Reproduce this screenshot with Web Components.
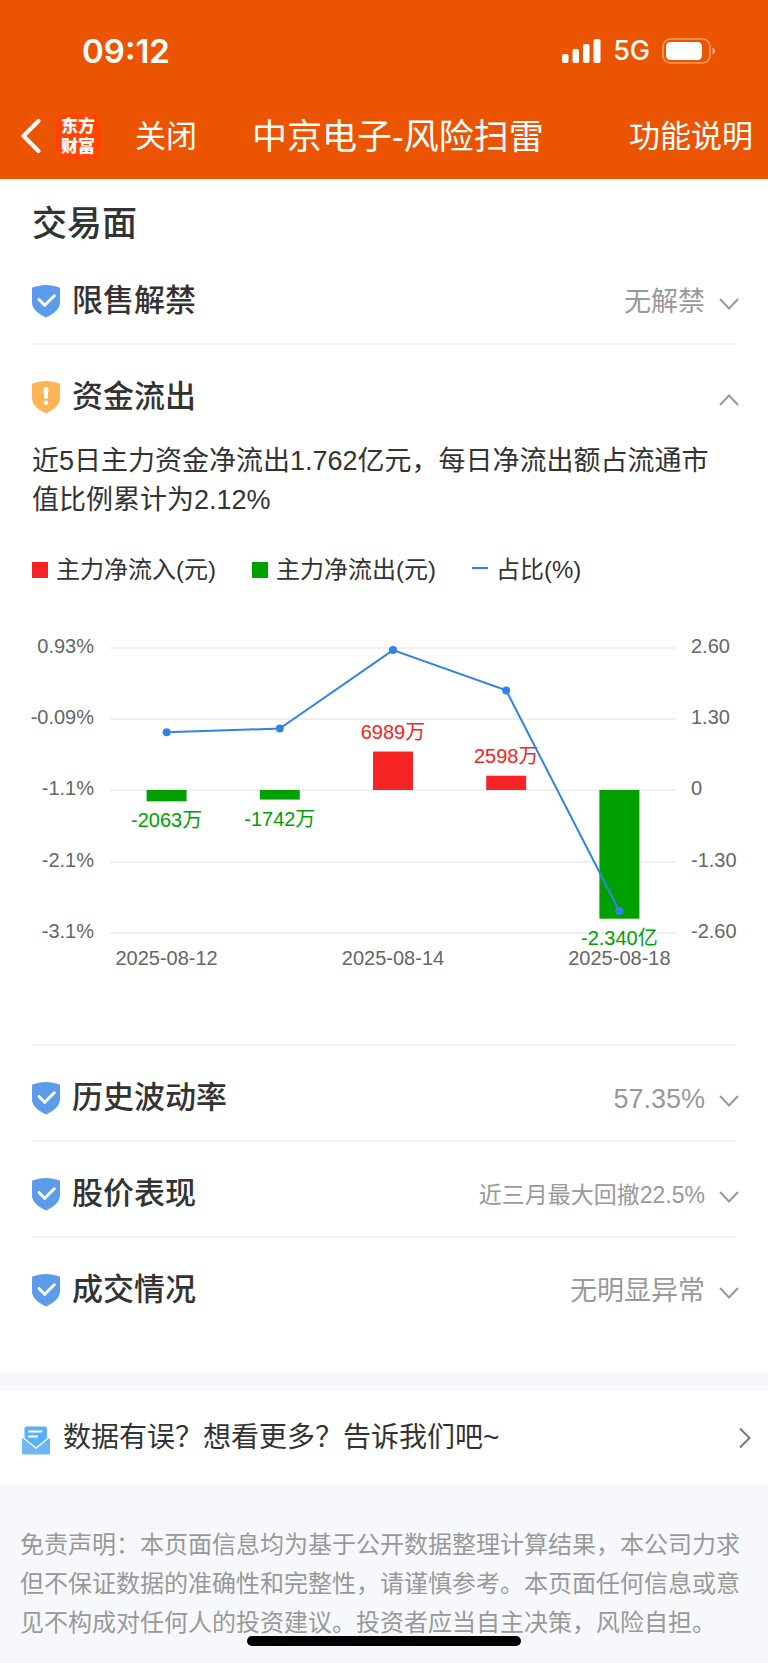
<!DOCTYPE html>
<html lang="zh-CN">
<head>
<meta charset="utf-8">
<meta name="viewport" content="width=device-width, initial-scale=1">
<title>中京电子-风险扫雷</title>
<style>
  html { background: #f7f8fb; }
  body {
    margin: 0;
    color: #333;
    font-family: "Liberation Sans", "Noto Sans CJK SC", sans-serif;
  }
</style>
</head>
<body>
<risk-page></risk-page>

<script>
const define = (name, html, setup) => {
  const template = document.createElement('template');
  template.innerHTML = html;
  customElements.define(name, class extends HTMLElement {
    constructor() {
      super();
      this.attachShadow({ mode: 'open' }).append(template.content.cloneNode(true));
    }
    connectedCallback() {
      if (setup && !this.ready) { this.ready = true; setup(this, this.shadowRoot); }
    }
  });
};

/* Phone status bar */
define('status-bar', `
<style>
  :host { display: flex; align-items: center; justify-content: space-between; height: 102px;
          padding: 0 52px 0 82px; color: #fff; font-family: Inter, "Liberation Sans", sans-serif; }
  time { font-size: 33px; font-weight: 600; line-height: 40px; }
  .right { display: flex; align-items: center; gap: 12px; }
  .net { font-size: 27px; font-weight: 500; line-height: 32px; }
  svg { display: block; }
</style>
<time>09:12</time>
<div class="right">
  <svg width="39" height="24" viewBox="0 0 39 24" fill="#fff" aria-hidden="true">
    <rect x="0" y="15" width="6.5" height="9" rx="2"/><rect x="10.5" y="10" width="6.5" height="14" rx="2"/>
    <rect x="21" y="5" width="6.5" height="19" rx="2"/><rect x="31.5" y="0" width="7" height="24" rx="2"/>
  </svg>
  <span class="net">5G</span>
  <svg width="54" height="26" viewBox="0 0 54 26" aria-hidden="true">
    <rect x="1" y="1" width="47" height="24" rx="7.5" fill="none" stroke="#fff" stroke-opacity=".42" stroke-width="1.6"/>
    <rect x="4" y="4" width="36" height="18" rx="4.5" fill="#fff"/>
    <path d="M50.5 9.5c3.6 1 3.6 6 0 7z" fill="#fff" fill-opacity=".5"/>
  </svg>
</div>`);

/* App logo tile */
define('app-logo', `
<style>
  :host { display: flex; flex-direction: column; align-items: center; justify-content: center; width: 46px; height: 46px;
          border-radius: 10px; background: #ff4500; color: #fff; font-size: 17px; line-height: 20px; font-weight: 900; }
</style>
<span>东方</span><span>财富</span>`);

/* Title bar */
define('nav-bar', `
<style>
  :host { display: flex; align-items: center; height: 70px; padding: 0 15px 7px 20px; color: #fff; }
  button, a { font: inherit; color: inherit; background: none; border: 0; padding: 0; text-decoration: none;
              font-size: 31px; line-height: 44px; white-space: nowrap; }
  svg { display: block; }
  app-logo { margin-left: 13px; }
  .close { margin-left: 34px; }
  h1 { margin: 0 0 0 55px; font-size: 35px; line-height: 48px; font-weight: 400; white-space: nowrap; }
  a { margin-left: auto; }
</style>
<button aria-label="返回">
  <svg width="22" height="36" viewBox="0 0 22 36"><path d="M18.5 2 3.5 17l15 15" fill="none" stroke="#fff" stroke-width="4" stroke-linecap="round" stroke-linejoin="round"/></svg>
</button>
<app-logo></app-logo>
<button class="close">关闭</button>
<h1>中京电子-风险扫雷</h1>
<a href="#help">功能说明</a>`);

/* Shield: level="ok" or level="warn" */
define('shield-icon', `
<style>
  :host { display: block; --c: #5c9aeb; }
  :host([level="warn"]) { --c: #fcb555; }
  svg { display: block; }
  .body { fill: var(--c); }
  :host([level="warn"]) .ok, :host(:not([level="warn"])) .warn { display: none; }
</style>
<svg width="28" height="34" viewBox="0 0 28 34" aria-hidden="true">
  <path class="body" d="M14 1C9.500 1 4.500 2 1 3.300Q0 3.700 0 4.600V18.500C0 25 6 29.500 14 33.500C22 29.500 28 25 28 18.500V4.600Q28 3.700 27 3.300C23.500 2 18.500 1 14 1Z"/>
  <path class="ok" d="M7 15.500 12.700 21.300 22.300 11.800" fill="none" stroke="#fff" stroke-width="3" stroke-linecap="round" stroke-linejoin="round"/>
  <g class="warn" fill="#fff"><path d="M11.500 9Q11.500 7 14 7T16.500 9L15.800 17.500Q15.600 19 14 19T12.200 17.500Z"/><circle cx="14" cy="22.800" r="2.200"/></g>
</svg>`);

/* Expandable row of the risk list */
define('risk-item', `
<style>
  :host { display: block; border-top: 2px solid #f2f2f2; }
  :host(:first-of-type) { border-top: 0; }
  button { display: flex; align-items: center; box-sizing: border-box; width: 100%; height: 94px; padding: 10px 0 0;
           border: 0; background: none; font: inherit; color: inherit; text-align: left; }
  .name { margin-left: 12px; font-size: 31px; line-height: 44px; font-weight: 500; }
  .value { margin-left: auto; padding: 1px 13px 0 0; color: #999; font-size: 27px; line-height: 40px; }
  :host([compact]) .value { font-size: 23px; }
  .arrow { display: block; margin-right: -4px; padding-top: 6px; }
  :host([open]) .arrow path { transform: rotate(180deg); transform-origin: 11px 7px; }
  .panel { display: none; }
  :host([open]) .panel { display: block; }
</style>
<button>
  <shield-icon></shield-icon>
  <span class="name"></span>
  <span class="value"></span>
  <svg class="arrow" width="22" height="14" viewBox="0 0 22 14" aria-hidden="true"><path d="M2 2l9 9.500 9-9.500" fill="none" stroke="#999" stroke-width="2"/></svg>
</button>
<div class="panel"><slot></slot></div>`, (el, root) => {
  root.querySelector('.name').textContent = el.getAttribute('name');
  root.querySelector('.value').textContent = el.getAttribute('value') || '';
  root.querySelector('shield-icon').setAttribute('level', el.getAttribute('level') || 'ok');
  const button = root.querySelector('button');
  const sync = () => button.setAttribute('aria-expanded', el.hasAttribute('open'));
  button.addEventListener('click', () => { el.toggleAttribute('open'); sync(); });
  sync();
});

/* Bars: net flow in 亿; line: share of float in percent */
define('flow-chart', `
<style>
  :host { display: block; }
  ul { display: flex; flex-wrap: wrap; gap: 0 36px; margin: 0; padding: 0; list-style: none; font-size: 24px; line-height: 36px; }
  li { display: flex; align-items: center; gap: 8px; white-space: nowrap; }
  i { width: 16px; height: 16px; }
  .in { background: #f52323; } .out { background: #00a000; }
  .rate { height: 2px; background: #3383e6; margin-bottom: 4px; }
  svg { display: block; width: 100%; height: auto; overflow: visible; }
  text { font-size: 20px; fill: #666; }
</style>
<ul>
  <li><i class="in"></i>主力净流入(元)</li>
  <li><i class="out"></i>主力净流出(元)</li>
  <li><i class="rate"></i>占比(%)</li>
</ul>
<svg viewBox="0 0 704 392" role="img" aria-label="近5日主力资金净流入流出"></svg>`, (el, root) => {
  const days = [
    { date: '2025-08-12', flow: -0.2063, label: '-2063万', rate: -0.26 },
    { date: '', flow: -0.1742, label: '-1742万', rate: -0.21 },
    { date: '2025-08-14', flow: 0.6989, label: '6989万', rate: 0.90 },
    { date: '', flow: 0.2598, label: '2598万', rate: 0.33 },
    { date: '2025-08-18', flow: -2.340, label: '-2.340亿', rate: -2.79 }
  ];
  const left = 78, right = 644, top = 60, step = 71, zero = 202;
  const x = i => left + (right - left) * (i + 0.5) / 5;
  const barY = v => zero - v * 143 / 2.6;
  const rateY = v => top + (0.93 - v) * 285 / 4.03;
  let s = '';
  ['0.93%', '-0.09%', '-1.1%', '-2.1%', '-3.1%'].forEach((t, i) => {
    const y = top + step * i + (i > 2 ? 1 : 0);
    s += `<path d="M${left} ${y}H${right}" stroke="#f0f0f0" stroke-width="2"/>`
       + `<text x="62" y="${y + 5}" text-anchor="end">${t}</text>`
       + `<text x="659" y="${y + 5}">${['2.60', '1.30', '0', '-1.30', '-2.60'][i]}</text>`;
  });
  days.forEach((d, i) => {
    const end = barY(d.flow), up = d.flow > 0, color = up ? '#f52323' : '#00a000';
    s += `<rect x="${x(i) - 20}" y="${Math.min(end, zero)}" width="40" height="${Math.abs(end - zero)}" fill="${color}"/>`
       + `<text x="${x(i)}" y="${up ? end - 13 : end + 26}" text-anchor="middle" style="fill:${color}">${d.label}</text>`;
    if (d.date) s += `<text x="${x(i)}" y="377" text-anchor="middle">${d.date}</text>`;
  });
  s += `<polyline points="${days.map((d, i) => x(i) + ',' + rateY(d.rate)).join(' ')}" fill="none" stroke="#3383e6" stroke-width="2"/>`;
  s += days.map((d, i) => `<circle cx="${x(i)}" cy="${rateY(d.rate)}" r="4" fill="#3383e6"/>`).join('');
  root.querySelector('svg').innerHTML = s;
});

/* Link to the feedback form */
define('feedback-link', `
<style>
  :host { display: block; background: #fff; }
  a { display: flex; align-items: center; box-sizing: border-box; height: 94px; padding: 0 16px 0 22px; color: inherit; text-decoration: none;
      font-size: 28px; line-height: 40px; }
  span { margin-left: 13px; }
  .go { margin-left: auto; }
  .mail { margin-top: 5px; }
</style>
<a href="#feedback">
  <svg class="mail" width="28" height="29" viewBox="0 0 28 29" aria-hidden="true">
    <defs><linearGradient id="g" x1="0" y1="1" x2="1" y2="0"><stop offset="0" stop-color="#79b8f5"/><stop offset="1" stop-color="#63b1f6"/></linearGradient></defs>
    <path d="M4.500 .500H23Q25 .500 25 2.500V12.800L14 21.500 2.500 12.800V2.500Q2.500 .500 4.500 .500Z" fill="#58b0fb"/>
    <path d="M0 12.300Q.600 11.500 1.500 12.200L14 22.500 26.500 12.200Q27.400 11.500 28 12.300V27Q28 28.500 26.500 28.500H1.500Q0 28.500 0 27Z" fill="url(#g)"/>
    <path d="M1 11.500 14 22.200 27 11.500" fill="none" stroke="#fff" stroke-width="1.200"/>
    <path d="M7 5.500H19.500M7 10.500H15" stroke="#fff" stroke-width="2" stroke-linecap="round"/>
  </svg>
  <span>数据有误？想看更多？告诉我们吧~</span>
  <svg class="go" width="14" height="22" viewBox="0 0 14 22" aria-hidden="true"><path d="M2 1.500 11.500 11 2 20.500" fill="none" stroke="#777" stroke-width="2"/></svg>
</a>`);

/* Gesture bar of the phone, over the page */
define('home-indicator', `
<style>
  :host { display: block; position: fixed; left: 50%; bottom: 17px; width: 274px; height: 10px; margin-left: -137px; border-radius: 5px; background: #000; }
</style>`);

define('risk-page', `
<style>
  :host { display: block; }
  header { background: #eb5502; }
  section { background: #fff; padding: 21px 32px 39px; }
  h2 { margin: 0 0 1px; font-size: 35px; line-height: 48px; font-weight: 500; }
  .summary { margin: 0; padding: 3px 8px 32px 0; font-size: 27px; line-height: 39px; }
  flow-chart { padding-bottom: 64px; }
  feedback-link { margin-top: 20px; }
  footer { padding: 40px 20px 21px; color: #999; font-size: 24px; line-height: 39px; }
  footer p { margin: 0; }
</style>
<header>
  <status-bar></status-bar>
  <nav-bar></nav-bar>
</header>
<main>
  <section>
    <h2>交易面</h2>
    <risk-item name="限售解禁" value="无解禁"></risk-item>
    <risk-item name="资金流出" level="warn" open>
      <p class="summary">近5日主力资金净流出1.762亿元，每日净流出额占流通市值比例累计为2.12%</p>
      <flow-chart></flow-chart>
    </risk-item>
    <risk-item name="历史波动率" value="57.35%"></risk-item>
    <risk-item name="股价表现" value="近三月最大回撤22.5%" compact></risk-item>
    <risk-item name="成交情况" value="无明显异常"></risk-item>
  </section>
  <feedback-link></feedback-link>
</main>
<footer><p>免责声明：本页面信息均为基于公开数据整理计算结果，本公司力求但不保证数据的准确性和完整性，请谨慎参考。本页面任何信息或意见不构成对任何人的投资建议。投资者应当自主决策，风险自担。</p></footer>
<home-indicator></home-indicator>`);
</script>
</body>
</html>
